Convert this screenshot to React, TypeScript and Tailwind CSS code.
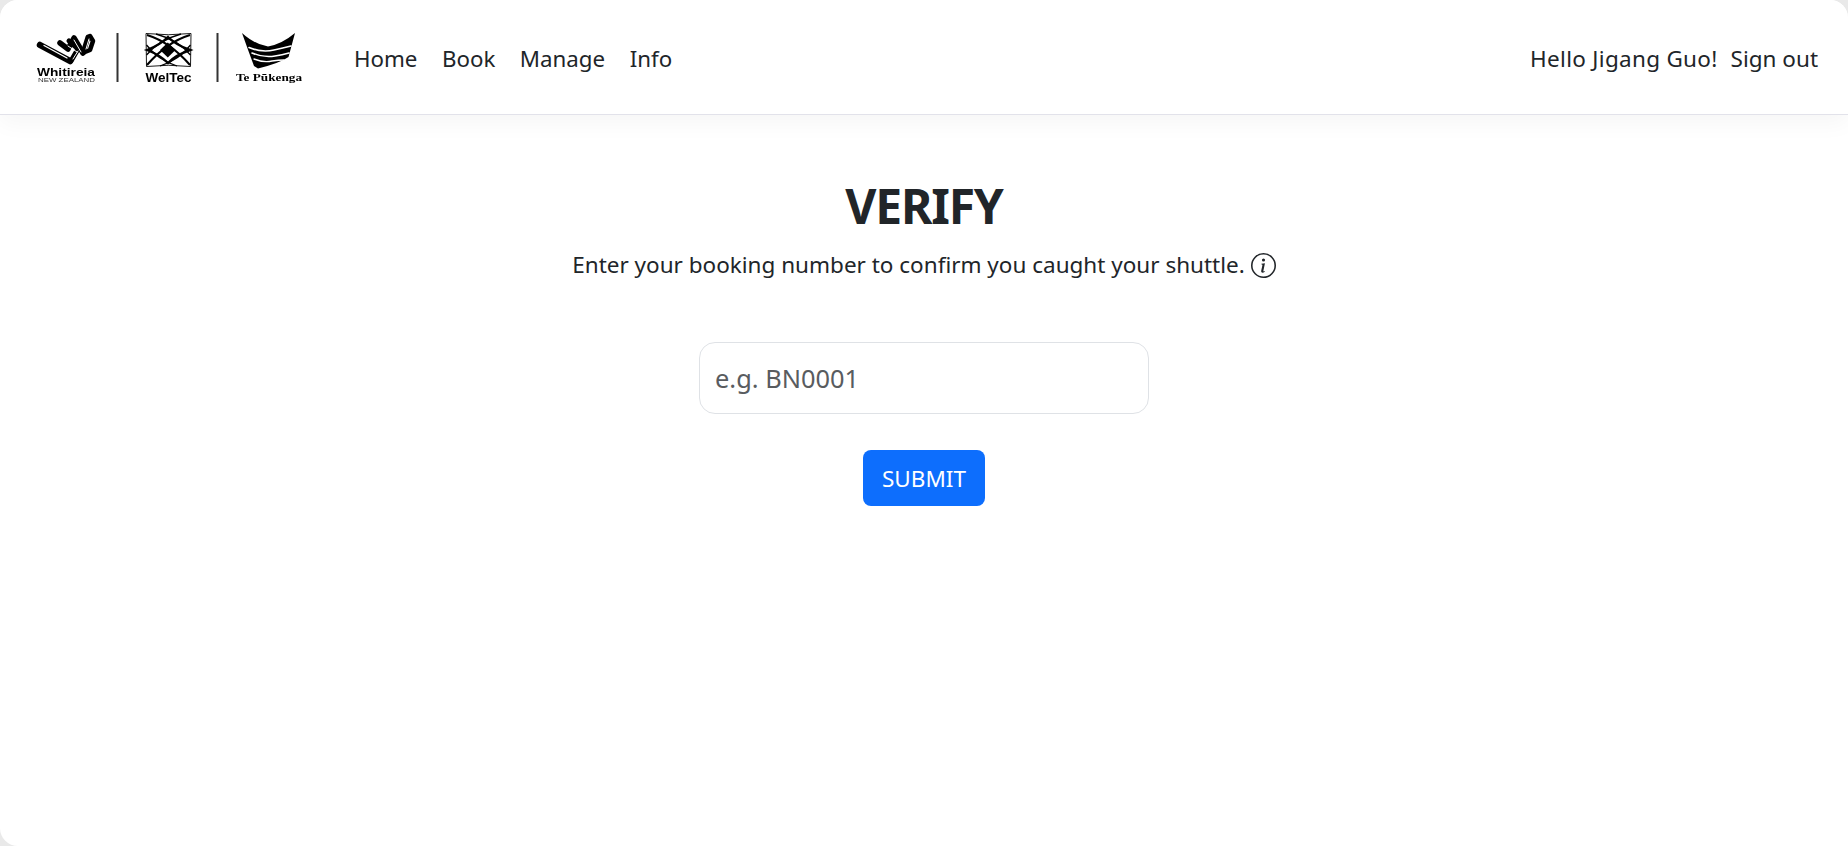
const font = { fontFamily: '"Noto Sans", sans-serif' };

const Logos = () => {
  return (
    <svg
      className="w-[270px] h-[52px] shrink-0 mt-[2px] [filter:blur(0.35px)]"
      viewBox="35 32 270 52"
    >
      {/* Whitireia mark */}
      <g fill="none" stroke="#000" strokeLinecap="round" strokeLinejoin="round">
        <path d="M40 45 L70 61" strokeWidth="6.5" />
        <path d="M60 43 L68 49 L74 38 L83 53" strokeWidth="5.5" />
        <path d="M71 61 L78 49 L69 41" strokeWidth="5" />
        <path d="M83 53 L88 37" strokeWidth="5" />
        <path d="M90 36 L93 41 L90 50 L85 52" strokeWidth="4.5" />
      </g>
      <g fill="none" stroke="#fff" strokeLinecap="round">
        <path d="M44 45.5 L67 58" strokeWidth="1.3" />
        <path d="M74 40 L81 52" strokeWidth="1" />
        <path d="M68 46 L77 52" strokeWidth="1" />
        <path d="M73 59 L78 51" strokeWidth="1" />
        <path d="M89 39 L86 49" strokeWidth="1" />
      </g>
      <text
        x="37"
        y="76"
        fontFamily="Liberation Sans"
        fontWeight="700"
        fontSize="10.5"
        textLength="58"
        lengthAdjust="spacingAndGlyphs"
      >
        Whitireia
      </text>
      <text
        x="38"
        y="82"
        fontFamily="Liberation Sans"
        fontSize="5.5"
        fill="#333"
        textLength="57"
        lengthAdjust="spacingAndGlyphs"
      >
        NEW ZEALAND
      </text>
      <rect x="116.5" y="33" width="2" height="49" fill="#333" />

      {/* WelTec mark */}
      <g fill="none" stroke="#000" strokeWidth="1.3">
        <path d="M146 33.5 Q168 36 191 33.5 L190.5 66.5 Q168 64 146.5 66.5 Z" strokeWidth="0.9" />
        <path d="M147 35 Q170 42 190 65" strokeWidth="2" />
        <path d="M190 35 Q167 42 147 65" strokeWidth="2" />
        <path d="M147 50 Q160 45 168 37 Q176 45 190 50 Q176 55 168 63 Q160 55 147 50 Z" strokeWidth="2.4" />
        <path d="M156 34 Q178 40 190.5 55" />
        <path d="M181 34 Q159 40 146.5 55" />
        <path d="M146.5 45 Q158 60 177 66" />
        <path d="M190.5 45 Q179 60 160 66" />
      </g>
      <path d="M167.8 42.5 L175.5 50 L167.8 57.5 L160 50 Z" fill="#000" />
      <text
        x="145.5"
        y="82"
        fontFamily="Liberation Sans"
        fontWeight="700"
        fontSize="12"
        textLength="46"
        lengthAdjust="spacingAndGlyphs"
      >
        WelTec
      </text>
      <rect x="216.5" y="33" width="2" height="49" fill="#333" />

      {/* Te Pukenga mark */}
      <path d="M242 33 Q254 44 268 46.5 Q282 44 295 33 L288.5 57 Q280 63 258 68.5 L254 66 Q248 50 242 33 Z" fill="#000" />
      <g fill="none" stroke="#fff" strokeLinecap="round">
        <path d="M249 47.5 Q262 53 274 50 Q283 48 291 46" strokeWidth="1.6" />
        <path d="M252 53 Q264 58 275 56 Q282 55 289 53" strokeWidth="1.6" />
        <path d="M254 59 Q264 63 272 61 Q279 60 284 60" strokeWidth="1.4" />
      </g>
      <text
        x="236"
        y="81"
        fontFamily="Liberation Serif"
        fontWeight="700"
        fontSize="10.5"
        textLength="66"
        lengthAdjust="spacingAndGlyphs"
      >
        Te Pūkenga
      </text>
    </svg>
  );
};

const NavLink = ({ label }: { label: string }) => {
  return (
    <a href="#" className="text-[#212529]">
      {label}
    </a>
  );
};

export default function App() {
  return (
    <div className="h-[846px] w-full overflow-hidden bg-[#e9e9e9]" style={font}>
      <div className="h-full rounded-tl-[18px] rounded-tr-[18px] rounded-bl-[18px] overflow-hidden bg-white">
        {/* Navbar */}
        <nav className="h-[115px] flex items-center justify-between pl-[35px] pr-[30px] bg-white border-b border-[#e2e2ea] shadow-[0_8px_22px_rgba(0,0,0,0.04)] text-[22.5px]">
          <div className="flex items-center">
            <Logos />
            <div className="ml-[49px] pt-[3px] flex items-center gap-[24.5px] text-[22.3px]">
              <NavLink label="Home" />
              <NavLink label="Book" />
              <NavLink label="Manage" />
              <NavLink label="Info" />
            </div>
          </div>
          <div className="pt-[3px] flex items-center gap-[13px] text-[#212529]">
            <span className="tracking-[0.3px]">Hello Jigang Guo!</span>
            <a href="#">Sign out</a>
          </div>
        </nav>

        {/* Verify form */}
        <main className="flex flex-col items-center">
          <h1 className="mt-[55px] text-[48px] leading-[72px] font-bold tracking-[-1.2px] text-[#212529]">
            VERIFY
          </h1>
          <p className="mt-[6px] flex items-center gap-[6px] text-[22.5px] leading-[34px] text-[#212529]">
            Enter your booking number to confirm you caught your shuttle.
            <svg className="w-[25px] h-[25px]" viewBox="0 0 16 16" fill="#212529">
              <path d="M8 15A7 7 0 1 1 8 1a7 7 0 0 1 0 14m0 1A8 8 0 1 0 8 0a8 8 0 0 0 0 16" />
              <path d="m8.93 6.588-2.29.287-.082.38.45.083c.294.07.352.176.288.469l-.738 3.468c-.194.897.105 1.319.808 1.319.545 0 1.178-.252 1.465-.598l.088-.416c-.2.176-.492.246-.686.246-.275 0-.375-.193-.304-.533zM9 4.5a1 1 0 1 1-2 0 1 1 0 0 1 2 0" />
            </svg>
          </p>
          <input
            className="mt-[60px] w-[450px] h-[72px] px-[15px] rounded-[16px] border border-[#dfe2e6] bg-white text-[25.4px] outline-none placeholder:text-[#595c5f]"
            placeholder="e.g. BN0001"
          />
          <button className="mt-[36px] w-[122px] h-[56px] pt-[1px] rounded-[8px] bg-[#0d6efd] text-white text-[22.5px]">
            SUBMIT
          </button>
        </main>
      </div>
    </div>
  );
}
